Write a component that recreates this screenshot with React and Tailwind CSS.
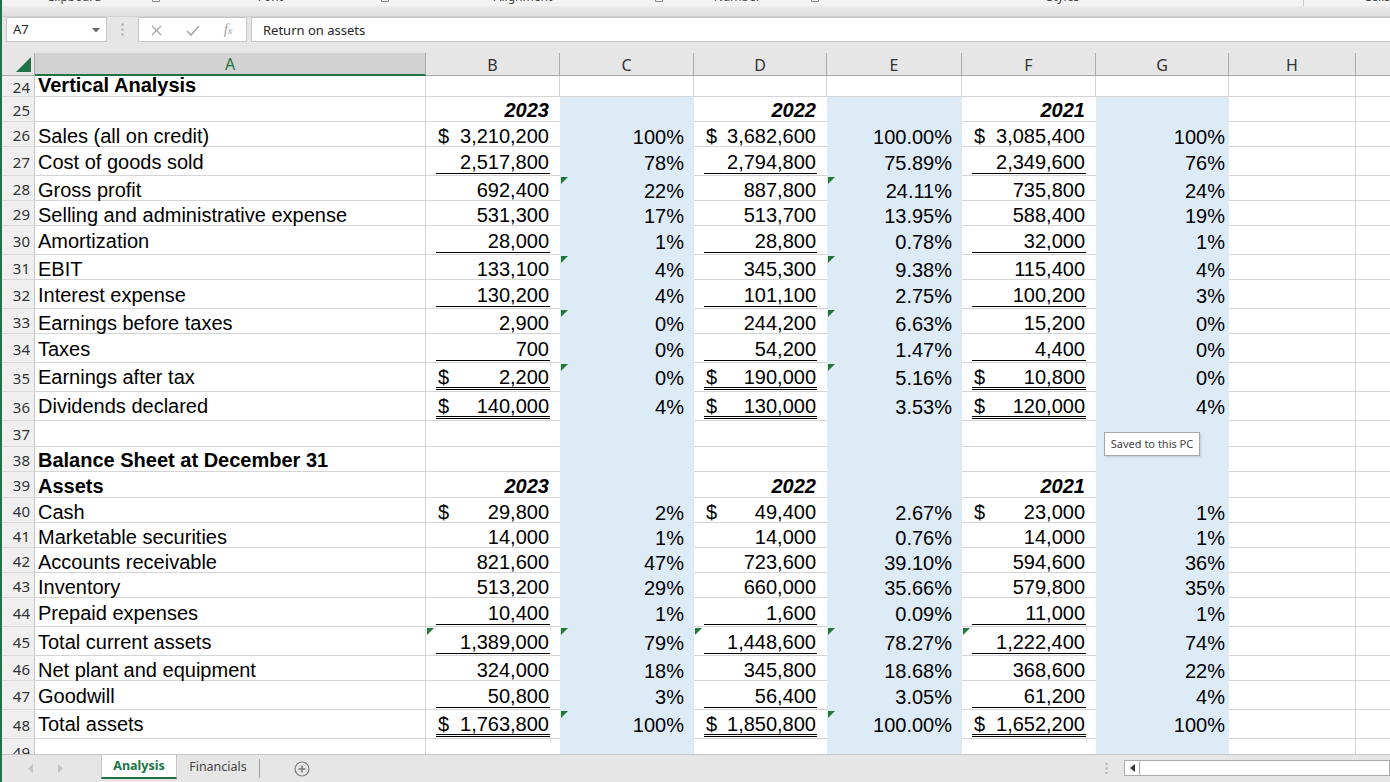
import React from 'react'

const TXT = "font-['Liberation_Sans',Arial,sans-serif] text-[20px] leading-[20px] text-black whitespace-nowrap"
const UI = "font-['Noto_Sans',sans-serif]"

const ROWS = [
  { n: 24, h: 21, bold: true, a: 'Vertical Analysis' },
  { n: 25, h: 25, yr: true },
  { n: 26, h: 25, a: 'Sales (all on credit)', v: [['$', '3,210,200'], '100%', ['$', '3,682,600'], '100.00%', ['$', '3,085,400'], '100%'] },
  { n: 27, h: 29, u: 1, a: 'Cost of goods sold', v: [['', '2,517,800'], '78%', ['', '2,794,800'], '75.89%', ['', '2,349,600'], '76%'] },
  { n: 28, h: 25, a: 'Gross profit', v: [['', '692,400'], '22%', ['', '887,800'], '24.11%', ['', '735,800'], '24%'], tri: [1, 3] },
  { n: 29, h: 25, a: 'Selling and administrative expense', v: [['', '531,300'], '17%', ['', '513,700'], '13.95%', ['', '588,400'], '19%'] },
  { n: 30, h: 29, u: 1, a: 'Amortization', v: [['', '28,000'], '1%', ['', '28,800'], '0.78%', ['', '32,000'], '1%'] },
  { n: 31, h: 25, a: 'EBIT', v: [['', '133,100'], '4%', ['', '345,300'], '9.38%', ['', '115,400'], '4%'], tri: [1, 3] },
  { n: 32, h: 29, u: 1, a: 'Interest expense', v: [['', '130,200'], '4%', ['', '101,100'], '2.75%', ['', '100,200'], '3%'] },
  { n: 33, h: 25, a: 'Earnings before taxes', v: [['', '2,900'], '0%', ['', '244,200'], '6.63%', ['', '15,200'], '0%'], tri: [1, 3] },
  { n: 34, h: 29, u: 1, a: 'Taxes', v: [['', '700'], '0%', ['', '54,200'], '1.47%', ['', '4,400'], '0%'] },
  { n: 35, h: 29, u: 2, a: 'Earnings after tax', v: [['$', '2,200'], '0%', ['$', '190,000'], '5.16%', ['$', '10,800'], '0%'], tri: [1, 3] },
  { n: 36, h: 29, u: 2, a: 'Dividends declared', v: [['$', '140,000'], '4%', ['$', '130,000'], '3.53%', ['$', '120,000'], '4%'] },
  { n: 37, h: 26 },
  { n: 38, h: 25, bold: true, a: 'Balance Sheet at December 31' },
  { n: 39, h: 26, bold: true, yr: true, a: 'Assets' },
  { n: 40, h: 25, a: 'Cash', v: [['$', '29,800'], '2%', ['$', '49,400'], '2.67%', ['$', '23,000'], '1%'] },
  { n: 41, h: 25, a: 'Marketable securities', v: [['', '14,000'], '1%', ['', '14,000'], '0.76%', ['', '14,000'], '1%'] },
  { n: 42, h: 25, a: 'Accounts receivable', v: [['', '821,600'], '47%', ['', '723,600'], '39.10%', ['', '594,600'], '36%'] },
  { n: 43, h: 25, a: 'Inventory', v: [['', '513,200'], '29%', ['', '660,000'], '35.66%', ['', '579,800'], '35%'] },
  { n: 44, h: 29, u: 1, a: 'Prepaid expenses', v: [['', '10,400'], '1%', ['', '1,600'], '0.09%', ['', '11,000'], '1%'] },
  { n: 45, h: 29, u: 1, a: 'Total current assets', v: [['', '1,389,000'], '79%', ['', '1,448,600'], '78.27%', ['', '1,222,400'], '74%'], tri: [0, 1, 2, 3, 4] },
  { n: 46, h: 25, a: 'Net plant and equipment', v: [['', '324,000'], '18%', ['', '345,800'], '18.68%', ['', '368,600'], '22%'] },
  { n: 47, h: 29, u: 1, a: 'Goodwill', v: [['', '50,800'], '3%', ['', '56,400'], '3.05%', ['', '61,200'], '4%'] },
  { n: 48, h: 29, u: 2, a: 'Total assets', v: [['$', '1,763,800'], '100%', ['$', '1,850,800'], '100.00%', ['$', '1,652,200'], '100%'], tri: [1, 3] },
  { n: 49, h: 25 },
]

const HEIGHT = { 21: 'h-[21px]', 25: 'h-[25px]', 26: 'h-[26px]', 29: 'h-[29px]' }
const WIDTHS = ['w-[134px]', 'w-[134px]', 'w-[133px]', 'w-[135px]', 'w-[134px]', 'w-[133px]']
const PCT_PAD = { 1: 'pr-[10px]', 3: 'pr-[10px]', 5: 'pr-[4px]' }
const YEARS = ['2023', '2022', '2021']

function Triangle() {
  return (
    <svg className="absolute top-[1px] left-[1px]" width="7" height="7" viewBox="0 0 7 7">
      <polygon points="0,0 7,0 0,7" fill="#1f7a36" />
    </svg>
  )
}

function GridRow({ r }) {
  // bottom spacing so that every cell of the row sits on one baseline
  let pb = 'pb-0'
  let line = 'mb-0'
  if (r.h === 21) {
    pb = 'pb-[1px]'
    line = 'mb-[1px]'
  } else if (r.bold || r.yr) {
    pb = 'pb-[1px]'
    line = 'mb-[1px]'
  } else if (r.u === 1) {
    pb = 'pb-[3px]'
    line = 'pb-[1px] border-b border-black mb-[1px]'
  } else if (r.u === 2) {
    pb = 'pb-[4px]'
    line = 'border-b-[3px] border-double border-black mb-[1px]'
  }

  return (
    <div className={`flex ${HEIGHT[r.h]}`}>
      <div className={`w-[33px] shrink-0 bg-[#efefef] border-r border-b border-r-[#c6c6c6] border-b-[#d9d9d9] flex items-center justify-end pr-[4px] pt-[2px] ${UI} text-[15px] text-[#333]`}>
        {r.n}
      </div>
      <div className={`w-[391px] shrink-0 border-r border-b border-[#d4d4d4] flex items-end pl-[3px] ${pb}`}>
        {r.a && <span className={`${TXT} ${r.bold ? 'font-bold' : ''}`}>{r.a}</span>}
      </div>
      {WIDTHS.map((w, i) => {
        const isNum = i % 2 === 0
        const blue = !isNum && r.n >= 25
        const edge = blue
          ? 'bg-[#ddebf7]'
          : r.n >= 25
            ? 'border-b border-[#d4d4d4]'
            : 'border-r border-b border-[#d4d4d4]'
        const tri = r.tri && r.tri.includes(i)
        if (isNum) {
          const val = r.v ? r.v[i] : null
          return (
            <div key={i} className={`${w} shrink-0 relative flex items-end ${edge}`}>
              {tri && <Triangle />}
              {val && (
                <span className={`flex justify-between w-full mx-[10px] ${line} ${TXT}`}>
                  <span className="pl-[2px]">{val[0]}</span>
                  <span className="pr-[1px]">{val[1]}</span>
                </span>
              )}
              {r.yr && (
                <span className={`w-full mx-[10px] text-right pr-[1px] font-bold italic ${line} ${TXT}`}>{YEARS[i / 2]}</span>
              )}
            </div>
          )
        }
        return (
          <div key={i} className={`${w} shrink-0 relative flex items-end justify-end ${PCT_PAD[i]} ${pb} ${edge}`}>
            {tri && <Triangle />}
            {r.v && <span className={TXT}>{r.v[i]}</span>}
          </div>
        )
      })}
      <div className="w-[127px] shrink-0 border-r border-b border-[#d4d4d4]" />
      <div className="flex-1 border-b border-[#d4d4d4]" />
    </div>
  )
}

function Launcher() {
  return (
    <svg className="-mt-[6px]" width="8" height="8" viewBox="0 0 8 8" fill="none" stroke="#8a8a8a">
      <path d="M0.5 3.5v4h7v-7h-3" />
      <path d="M3 5l3.5-3.5M4 1.5h2.5V4" />
    </svg>
  )
}

function RibbonEdge() {
  const lab = `${UI} text-[12px] leading-[12px] -mt-[9px] text-[#444] text-center`
  return (
    <div className="h-[6px] bg-[#f3f3f3] overflow-hidden flex items-start">
      <div className={`w-[146px] ${lab}`}>Clipboard</div>
      <div className="w-[20px] flex justify-center"><Launcher /></div>
      <div className={`w-[212px] ${lab}`}>Font</div>
      <div className="w-[20px] flex justify-center"><Launcher /></div>
      <div className={`w-[260px] ${lab}`}>Alignment</div>
      <div className="w-[16px] flex justify-center"><Launcher /></div>
      <div className={`w-[142px] ${lab}`}>Number</div>
      <div className="w-[16px] flex justify-center"><Launcher /></div>
      <div className={`w-[486px] ${lab}`}>Styles</div>
      <div className="w-px h-[6px] bg-[#c8c8c8]" />
      <div className={`ml-[60px] ${lab}`}>Cells</div>
    </div>
  )
}

function FormulaBar() {
  return (
    <>
      <div className="h-[11px] bg-gradient-to-b from-[#ececec] to-[#dedede] border-b border-[#d2d2d2]" />
      <div className="h-[26px] bg-[#e6e6e6] flex items-start">
        <div className="ml-[4px] w-[101px] h-[25px] bg-white border border-[#c6c6c6] flex items-center justify-between pl-[6px] pr-[6px] pt-[1px]">
          <span className={`${UI} text-[13px] text-[#262626]`}>A7</span>
          <svg width="8" height="5" viewBox="0 0 8 5"><polygon points="0,0 8,0 4,4.5" fill="#6b6b6b" /></svg>
        </div>
        <div className="w-[31px] h-[25px] flex items-center justify-center">
          <svg width="3" height="13" viewBox="0 0 3 13" fill="#a6a6a6">
            <rect x="0.5" y="0.5" width="2" height="2" />
            <rect x="0.5" y="5.5" width="2" height="2" />
            <rect x="0.5" y="10.5" width="2" height="2" />
          </svg>
        </div>
        <div className="w-[109px] h-[25px] bg-white border border-[#c6c6c6] flex items-center pt-[1px]">
          <div className="w-[36px] flex justify-center">
            <svg width="11" height="11" viewBox="0 0 11 11" stroke="#a6a6a6" strokeWidth="1.3"><path d="M1 1l9 9M10 1l-9 9" /></svg>
          </div>
          <div className="w-[36px] flex justify-center">
            <svg width="14" height="11" viewBox="0 0 14 11" fill="none" stroke="#a6a6a6" strokeWidth="1.6"><path d="M1 6l4 4 8-9" /></svg>
          </div>
          <div className="w-[36px] flex justify-center">
            <span className="italic font-['Liberation_Serif',serif] text-[15px] leading-[15px] text-[#a6a6a6]">f<span className="text-[11px]">x</span></span>
          </div>
        </div>
        <div className="ml-[4px] flex-1 h-[25px] bg-white border-y border-l border-[#c6c6c6] flex items-center pl-[11px] pt-[2px]">
          <span className={`${UI} text-[13px] text-[#262626]`}>Return on assets</span>
        </div>
      </div>
      <div className="h-[10px] bg-[#e6e6e6]" />
    </>
  )
}

function ColumnHeader() {
  const h = `${UI} text-[16px] text-[#333] flex items-center justify-center pt-[1px] border-r border-b border-[#ababab] shrink-0`
  return (
    <div className="h-[23px] flex bg-[#e6e6e6]">
      <div className="w-[33px] shrink-0 border-r border-b border-[#ababab] flex items-end justify-end pr-[3px] pb-[3px]">
        <svg width="15" height="15" viewBox="0 0 15 15"><polygon points="15,0 15,15 0,15" fill="#217346" /></svg>
      </div>
      <div className={`w-[391px] shrink-0 ${UI} text-[16px] text-[#217346] bg-[#d2d2d2] flex items-center justify-center pt-[1px] border-r border-r-[#ababab] border-b-2 border-b-[#217346]`}>A</div>
      <div className={`w-[134px] ${h}`}>B</div>
      <div className={`w-[134px] ${h}`}>C</div>
      <div className={`w-[133px] ${h}`}>D</div>
      <div className={`w-[135px] ${h}`}>E</div>
      <div className={`w-[134px] ${h}`}>F</div>
      <div className={`w-[133px] ${h}`}>G</div>
      <div className={`w-[127px] ${h}`}>H</div>
      <div className="flex-1 border-b border-[#ababab]" />
    </div>
  )
}

function SheetTabs() {
  return (
    <div className="h-[28px] bg-[#e6e6e6] border-t border-[#c6c6c6] flex items-start">
      <div className="w-[99px] h-[27px] flex items-center">
        <svg className="ml-[26px]" width="6" height="9" viewBox="0 0 6 9"><polygon points="5,0 5,9 0,4.5" fill="#c4c4c4" /></svg>
        <svg className="ml-[23px]" width="6" height="9" viewBox="0 0 6 9"><polygon points="1,0 1,9 6,4.5" fill="#c4c4c4" /></svg>
      </div>
      <div className={`w-[76px] h-[24px] bg-white border-x border-[#c6c6c6] border-b-2 border-b-[#217346] flex items-center justify-center ${UI} text-[12.5px] font-bold text-[#217346]`}>
        Analysis
      </div>
      <div className={`w-[82px] h-[24px] flex items-center justify-center ${UI} text-[12.5px] text-[#444]`}>Financials</div>
      <div className="w-px h-[19px] mt-[4px] bg-[#a0a0a0]" />
      <div className="ml-[34px] h-[27px] flex items-center">
        <svg width="16" height="16" viewBox="0 0 16 16" fill="none" stroke="#7a7a7a" strokeWidth="1.2">
          <circle cx="8" cy="8" r="7" />
          <path d="M8 4.5v7M4.5 8h7" strokeWidth="1.5" />
        </svg>
      </div>
      <div className="flex-1" />
      <div className="w-[36px] h-[27px] flex items-center justify-center">
        <svg width="3" height="11" viewBox="0 0 3 11" fill="#b0b0b0">
          <rect x="0.5" y="0" width="2" height="2" />
          <rect x="0.5" y="4.5" width="2" height="2" />
          <rect x="0.5" y="9" width="2" height="2" />
        </svg>
      </div>
      <div className="w-[266px] h-[16px] mt-[5px] bg-white border border-[#ababab] flex">
        <div className="w-[15px] h-full border-r border-[#ababab] flex items-center justify-center">
          <svg width="5" height="8" viewBox="0 0 5 8"><polygon points="5,0 5,8 0,4" fill="#333" /></svg>
        </div>
      </div>
    </div>
  )
}

export default function App() {
  return (
    <div className="w-[1390px] h-[782px] overflow-hidden bg-white relative border-l-2 border-[#217346] flex flex-col">
      <RibbonEdge />
      <FormulaBar />
      <ColumnHeader />
      <div className="h-[678px] overflow-hidden">
        {ROWS.map((r) => (
          <GridRow key={r.n} r={r} />
        ))}
      </div>
      <SheetTabs />

      {/* status tooltip */}
      <div className={`absolute left-[1102px] top-[432px] w-[96px] h-[24px] bg-white border border-[#a8a8a8] shadow-[1px_1px_2px_rgba(0,0,0,0.15)] flex items-center justify-center ${UI} text-[11px] text-[#444]`}>
        Saved to this PC
      </div>
    </div>
  )
}
